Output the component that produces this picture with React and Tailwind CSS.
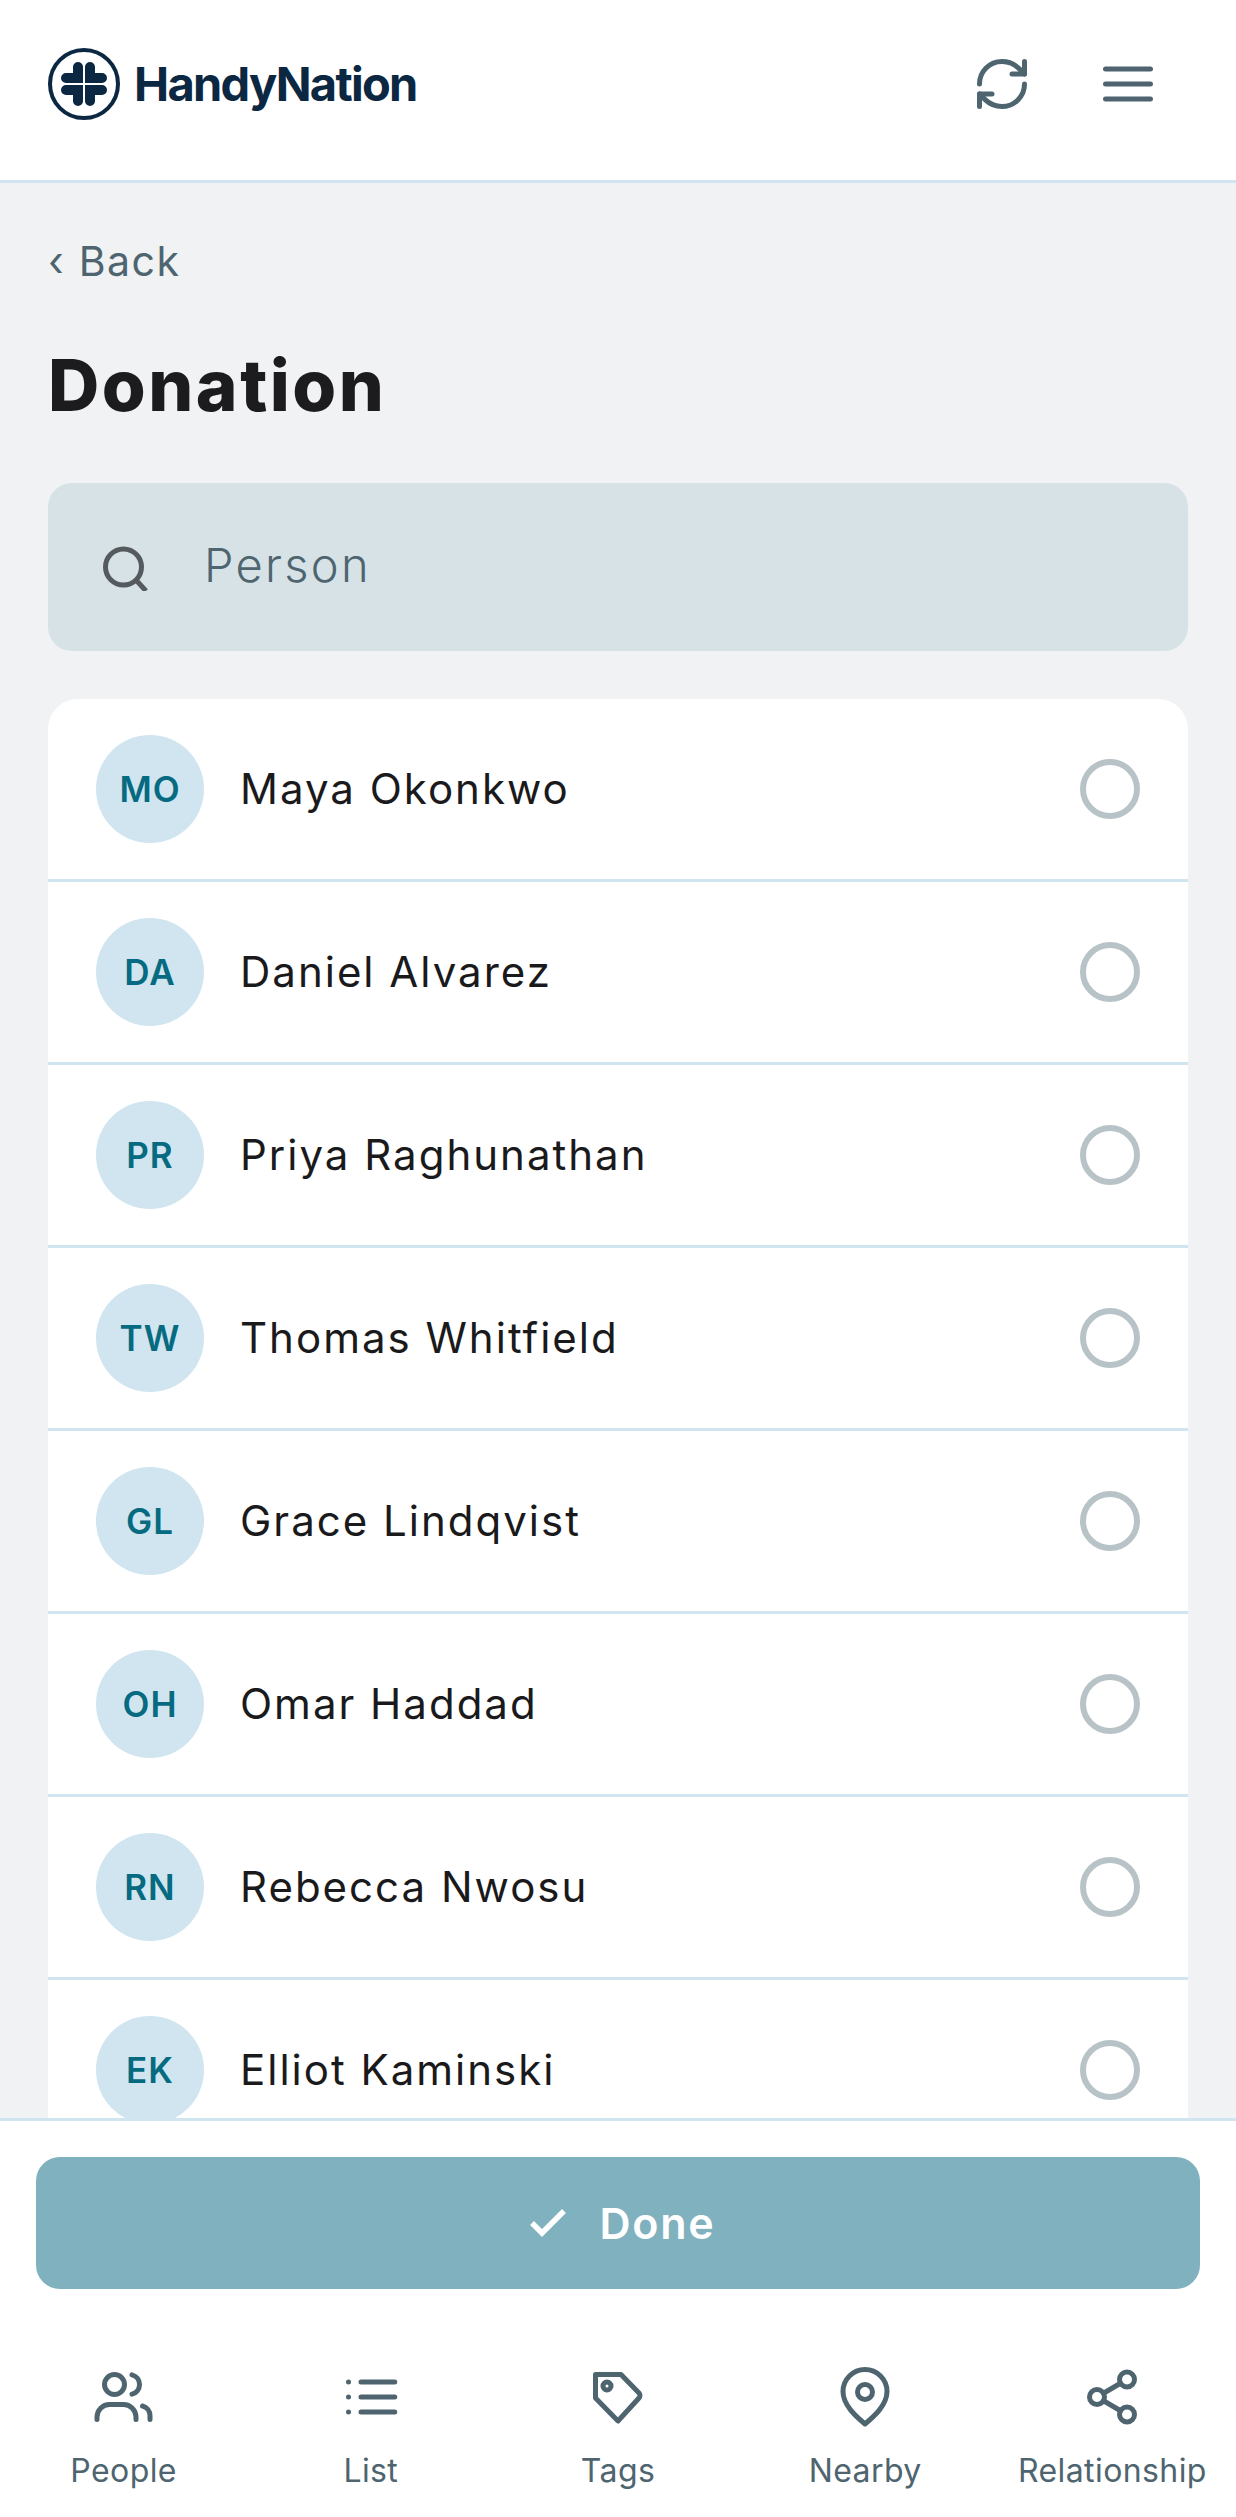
import React from "react";
import { Check, RefreshCw, Share2 } from "lucide-react";

const people = [
  ["MO", "Maya Okonkwo"],
  ["DA", "Daniel Alvarez"],
  ["PR", "Priya Raghunathan"],
  ["TW", "Thomas Whitfield"],
  ["GL", "Grace Lindqvist"],
  ["OH", "Omar Haddad"],
  ["RN", "Rebecca Nwosu"],
  ["EK", "Elliot Kaminski"],
];

const iconProps = {
  viewBox: "0 0 24 24",
  fill: "none",
  stroke: "currentColor",
  strokeWidth: 2,
  strokeLinecap: "round",
  strokeLinejoin: "round",
};

const PeopleIcon = ({ className }) => (
  <svg {...iconProps} viewBox="0.8 0 24 24" className={className}>
    <circle cx="9" cy="7" r="4" />
    <path d="M2 21v-1a5 5 0 0 1 5-5h5.6a5 5 0 0 1 5 5v1" />
    <path d="M16 3.13a4 4 0 0 1 0 7.75" />
    <path d="M23.2 21v-1.5a4 4 0 0 0-3-3.9" />
  </svg>
);

const ListIcon = ({ className }) => (
  <svg {...iconProps} className={className}>
    <path d="M3 6h.01M3 12h.01M3 18h.01M8 6h13.5M8 12h13.5M8 18h13.5" />
  </svg>
);

const TagIcon = ({ className }) => (
  <svg {...iconProps} className={className}>
    <path d="M3 3h10.2l7.2 7.4a1.5 1.5 0 0 1 0 2L12 21.6 3 12.4z" />
    <circle cx="7.6" cy="7.6" r="1.6" />
  </svg>
);

const PinIcon = ({ className }) => (
  <svg {...iconProps} className={className}>
    <path d="M12 22.8C9 20.2 3.2 15.5 3.2 9.8a8.8 8.8 0 0 1 17.6 0C20.8 15.5 15 20.2 12 22.8z" />
    <circle cx="12" cy="10" r="3" />
  </svg>
);

const tabs = [
  ["People", PeopleIcon],
  ["List", ListIcon],
  ["Tags", TagIcon],
  ["Nearby", PinIcon],
  ["Relationship", Share2],
];

const PersonRow = ({ initials, name }) => (
  <div className="flex h-[183px] shrink-0 items-center border-b-[3px] border-[#d0e5f0] px-[48px]">
    <div className="flex h-[108px] w-[108px] shrink-0 items-center justify-center rounded-full bg-[#d0e5f0] text-[35px] font-semibold tracking-[1px] text-[#066a80]">
      {initials}
    </div>
    <div className="mb-[2px] ml-[36px] flex-1 text-[42px] tracking-[2px] text-[#1a1a1c]">{name}</div>
    <div className="h-[60px] w-[60px] rounded-full border-[6px] border-[#b8c3c8]" />
  </div>
);

export default function App() {
  return (
    <div className="flex h-[2517px] w-[1236px] flex-col overflow-hidden bg-[#f0f2f4] font-['Inter',sans-serif]">
      <header className="flex h-[183px] shrink-0 items-center justify-between border-b-[3px] border-[#d0e5f0] bg-white pb-[12px] pl-[48px] pr-[78px]">
        <div className="flex items-center gap-[14px]">
          <svg viewBox="0 0 72 72" className="h-[72px] w-[72px] text-[#0b2742]" fill="currentColor">
            <circle cx="36" cy="36" r="34" fill="none" stroke="currentColor" strokeWidth="4" />
            <path d="M35 35H18a5 5 0 0 1 0-10h7v-6a5 5 0 0 1 10 0z" />
            <path d="M37 35h17a5 5 0 0 0 0-10h-7v-6a5 5 0 0 0-10 0z" />
            <path d="M35 37H18a5 5 0 0 0 0 10h7v6a5 5 0 0 0 10 0z" />
            <path d="M37 37h17a5 5 0 0 1 0 10h-7v6a5 5 0 0 1-10 0z" />
          </svg>
          <span className="text-[47px] font-bold tracking-[-1.7px] text-[#0b2742]">HandyNation</span>
        </div>
        <div className="flex items-center gap-[66px] text-[#4e6570]">
          <RefreshCw className="h-[60px] w-[60px]" />
          <svg {...iconProps} className="h-[60px] w-[60px]">
            <path d="M3 6h18M3 12h18M3 18h18" />
          </svg>
        </div>
      </header>

      <main className="flex min-h-0 flex-1 flex-col overflow-hidden px-[48px] pt-[52px]">
        <div className="flex items-baseline gap-[15px] text-[41px] leading-[52px] text-[#4e6570]">
          <span>‹</span>
          <span className="tracking-[1.5px]">Back</span>
        </div>
        <h1 className="mt-[54px] text-[71px] font-extrabold leading-[88px] tracking-[2.5px] text-[#1c1c1f]">Donation</h1>
        <div className="mt-[54px] flex h-[168px] shrink-0 items-center rounded-[24px] bg-[#d6e2e6] pl-[54px]">
          <svg viewBox="0 0 48 48" fill="none" stroke="#555a5e" strokeWidth="5" className="h-[48px] w-[48px]">
            <circle cx="21.5" cy="24" r="18" />
            <path d="m34 37 10 11" />
          </svg>
          <span className="mb-[4px] ml-[54px] text-[47px] font-light tracking-[2.3px] text-[#4e6570]">Person</span>
        </div>
        <div className="mt-[48px] overflow-hidden rounded-t-[30px] bg-white">
          {people.map(([initials, name]) => (
            <PersonRow key={initials} initials={initials} name={name} />
          ))}
        </div>
      </main>

      <footer className="shrink-0 border-t-[3px] border-[#d0e5f0] bg-white">
        <div className="px-[36px] pt-[36px]">
          <button className="flex h-[132px] w-full items-center justify-center gap-[27px] rounded-[24px] bg-[#7fb1bf] pl-[4px] text-[43px] font-semibold tracking-[1.8px] text-white">
            <Check className="h-[48px] w-[48px]" strokeWidth={2.75} strokeLinecap="butt" strokeLinejoin="miter" />
            Done
          </button>
        </div>
        <nav className="flex h-[228px] items-start pt-[78px]">
          {tabs.map(([label, Icon]) => (
            <div key={label} className="flex flex-1 flex-col items-center text-[#4e6570]">
              <Icon className="h-[60px] w-[60px]" />
              <span className="mt-[24px] text-[32px] leading-[40px] tracking-[0.4px]">{label}</span>
            </div>
          ))}
        </nav>
      </footer>
    </div>
  );
}
